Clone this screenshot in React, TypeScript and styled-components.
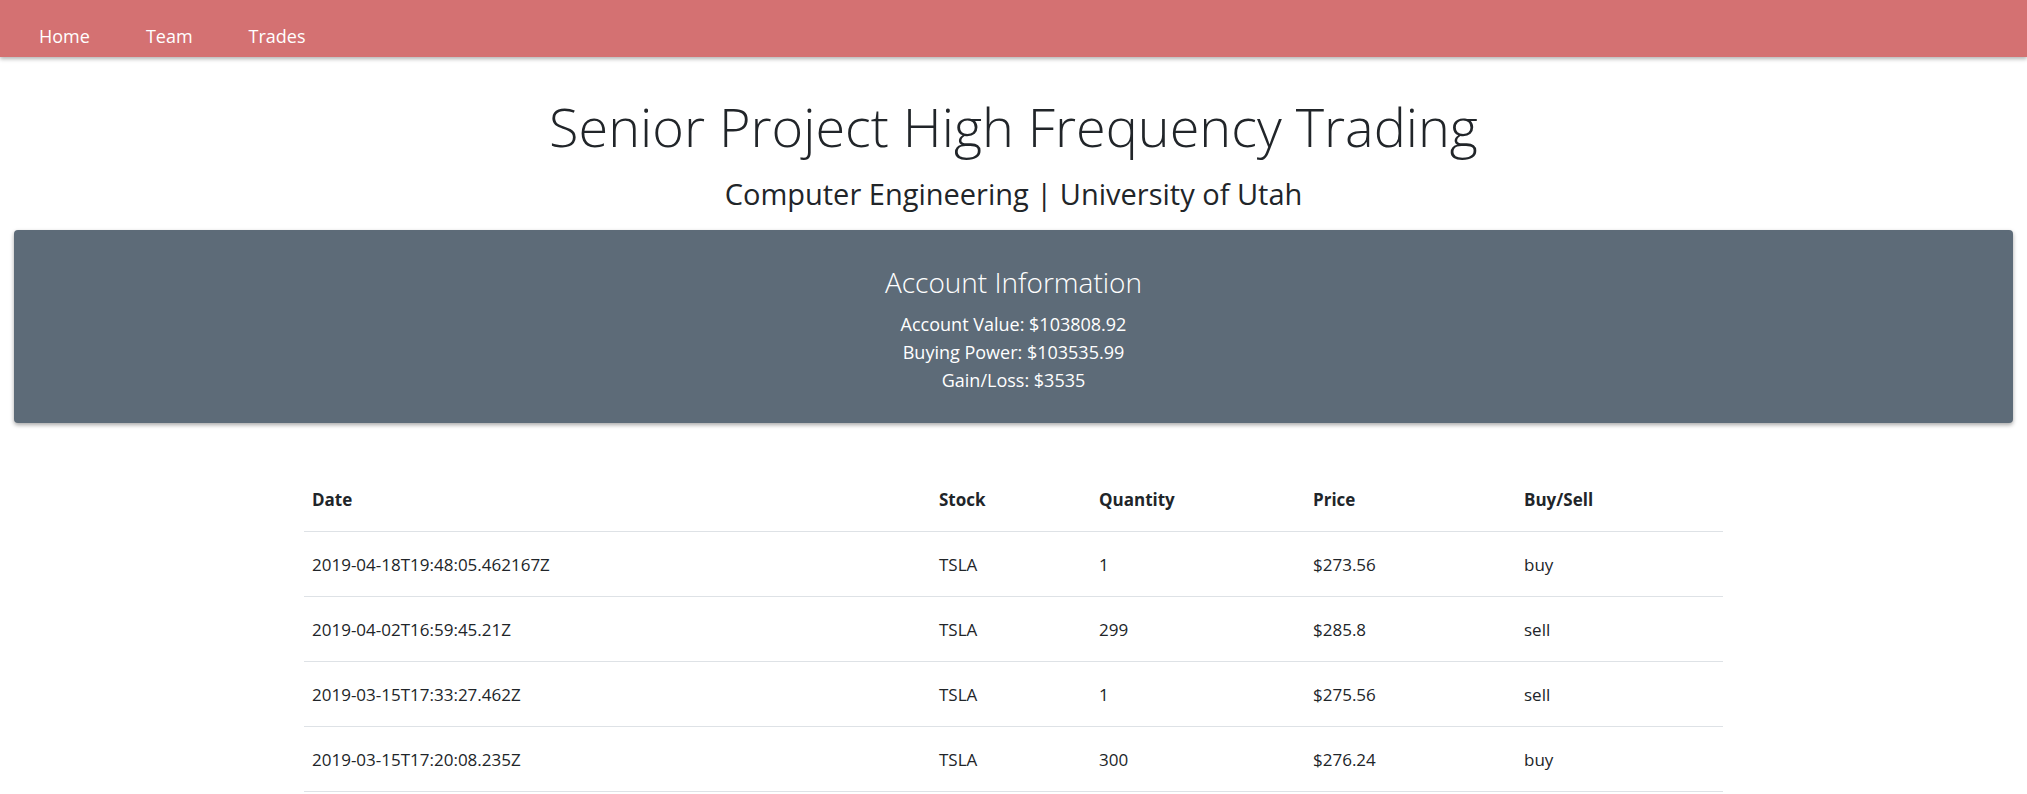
import React from "react";
import styled, { createGlobalStyle } from "styled-components";

const GlobalStyle = createGlobalStyle`
  html, body { margin: 0; padding: 0; background: #fff; }
  body {
    font-family: "Open Sans", "Noto Sans", sans-serif;
    color: #212529;
  }
  * { box-sizing: border-box; }
`;

const NavBar = styled.nav`
  height: 57px;
  background: #d47172;
  display: flex;
  align-items: flex-start;
  padding: 27px 0 0 39px;
  gap: 56px;
  box-shadow: 0 2px 4px rgba(0, 0, 0, 0.3);
`;

const NavLink = styled.a`
  color: #fff;
  font-size: 18px;
  text-decoration: none;
  line-height: 1;
`;

const Header = styled.header`
  display: flex;
  flex-direction: column;
  align-items: center;
  padding-top: 37px;
`;

const Title = styled.h1`
  margin: 0;
  font-size: 54px;
  font-weight: 300;
  line-height: 1.2;
`;

const Subtitle = styled.h3`
  margin: 18px 0 0;
  font-size: 29px;
  font-weight: 400;
  line-height: 1.2;
`;

const Card = styled.section`
  margin: 18px 14px 0;
  height: 193px;
  background: #5d6b78;
  border-radius: 4px;
  box-shadow: 0 2px 4px rgba(0, 0, 0, 0.35);
  color: #fff;
  display: flex;
  flex-direction: column;
  align-items: center;
  padding-top: 36px;
`;

const CardTitle = styled.h4`
  margin: 0 0 11px;
  font-size: 28px;
  font-weight: 300;
  line-height: 1.2;
`;

const InfoLine = styled.div`
  font-size: 18px;
  line-height: 28px;
`;

const TableWrap = styled.div`
  width: 1419px;
  margin: 46px auto 0;
`;

const Table = styled.table`
  width: 100%;
  border-collapse: collapse;
  font-size: 17px;
`;

const Th = styled.th<{ $w?: string }>`
  text-align: left;
  font-weight: 700;
  padding: 0 8px;
  height: 63px;
  width: ${(p) => p.$w || "auto"};
  border-bottom: 1px solid #dee2e6;
`;

const Td = styled.td`
  padding: 0 8px;
  height: 65px;
  border-bottom: 1px solid #dee2e6;
`;

const trades = [
  { date: "2019-04-18T19:48:05.462167Z", stock: "TSLA", qty: "1", price: "$273.56", side: "buy" },
  { date: "2019-04-02T16:59:45.21Z", stock: "TSLA", qty: "299", price: "$285.8", side: "sell" },
  { date: "2019-03-15T17:33:27.462Z", stock: "TSLA", qty: "1", price: "$275.56", side: "sell" },
  { date: "2019-03-15T17:20:08.235Z", stock: "TSLA", qty: "300", price: "$276.24", side: "buy" },
];

export default function App() {
  return (
    <>
      <GlobalStyle />
      <NavBar>
        <NavLink href="#">Home</NavLink>
        <NavLink href="#">Team</NavLink>
        <NavLink href="#">Trades</NavLink>
      </NavBar>
      <Header>
        <Title>Senior Project High Frequency Trading</Title>
        <Subtitle>Computer Engineering | University of Utah</Subtitle>
      </Header>
      <Card>
        <CardTitle>Account Information</CardTitle>
        <InfoLine>Account Value: $103808.92</InfoLine>
        <InfoLine>Buying Power: $103535.99</InfoLine>
        <InfoLine>Gain/Loss: $3535</InfoLine>
      </Card>
      <TableWrap>
        <Table>
          <thead>
            <tr>
              <Th $w="627px">Date</Th>
              <Th $w="160px">Stock</Th>
              <Th $w="214px">Quantity</Th>
              <Th $w="211px">Price</Th>
              <Th>Buy/Sell</Th>
            </tr>
          </thead>
          <tbody>
            {trades.map((t) => (
              <tr key={t.date}>
                <Td>{t.date}</Td>
                <Td>{t.stock}</Td>
                <Td>{t.qty}</Td>
                <Td>{t.price}</Td>
                <Td>{t.side}</Td>
              </tr>
            ))}
          </tbody>
        </Table>
      </TableWrap>
    </>
  );
}
